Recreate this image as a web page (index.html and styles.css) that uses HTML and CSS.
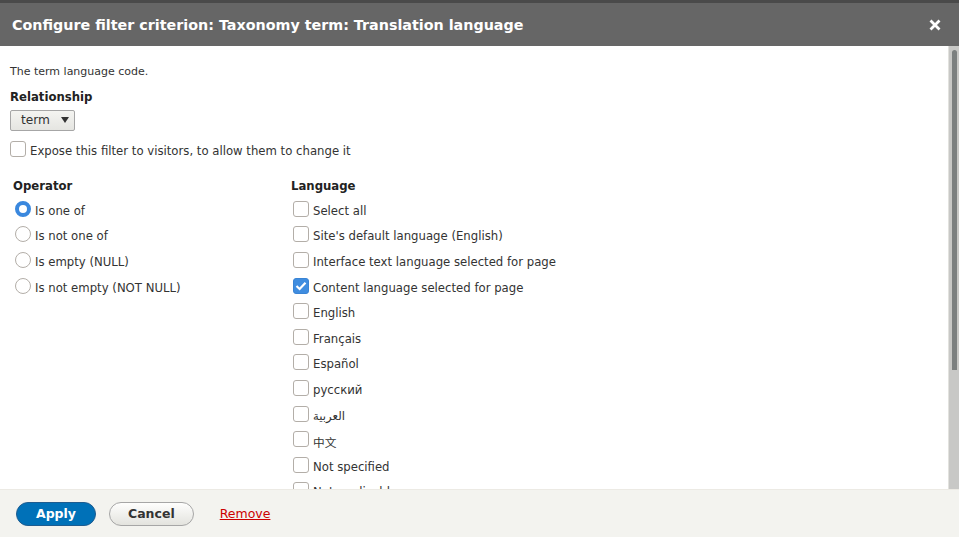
FILE: index.html
```html
<!DOCTYPE html>
<html lang="en">
<head>
<meta charset="utf-8">
<title>Configure filter criterion</title>
<link rel="stylesheet" href="styles.css">
</head>
<body>
<div class="strip"></div>
<div class="dialog">
  <div class="titlebar">
    <span class="title">Configure filter criterion: Taxonomy term: Translation language</span>
    <span class="close">
      <svg width="12" height="12" viewBox="0 0 12 12"><path d="M1.5 1.5 L10.5 10.5 M10.5 1.5 L1.5 10.5" stroke="#fff" stroke-width="2.8" stroke-linecap="butt"/></svg>
    </span>
  </div>
  <div class="body">
    <div class="scroll">
      <p class="desc">The term language code.</p>
      <div class="label">Relationship</div>
      <div class="select"><span>term</span><span class="caret"></span></div>
      <label class="opt expose"><span class="cb"></span>Expose this filter to visitors, to allow them to change it</label>
      <div class="cols">
        <div class="col-op">
          <div class="label">Operator</div>
          <label class="opt"><span class="radio on"></span>Is one of</label>
          <label class="opt"><span class="radio"></span>Is not one of</label>
          <label class="opt"><span class="radio"></span>Is empty (NULL)</label>
          <label class="opt"><span class="radio"></span>Is not empty (NOT NULL)</label>
        </div>
        <div class="col-lang">
          <div class="label">Language</div>
          <label class="opt"><span class="cb"></span>Select all</label>
          <label class="opt"><span class="cb"></span>Site's default language (English)</label>
          <label class="opt"><span class="cb"></span>Interface text language selected for page</label>
          <label class="opt"><span class="cb on"><svg width="12" height="10" viewBox="0 0 12 10"><path d="M1.5 5 L4.6 8 L10.5 1.8" fill="none" stroke="#fff" stroke-width="2.2"/></svg></span>Content language selected for page</label>
          <label class="opt"><span class="cb"></span>English</label>
          <label class="opt"><span class="cb"></span>Français</label>
          <label class="opt"><span class="cb"></span>Español</label>
          <label class="opt"><span class="cb"></span>русский</label>
          <label class="opt"><span class="cb"></span><span lang="ar">العربية</span></label>
          <label class="opt"><span class="cb"></span><span class="cjk">中文</span></label>
          <label class="opt"><span class="cb"></span>Not specified</label>
          <label class="opt"><span class="cb"></span>Not applicable</label>
        </div>
      </div>
    </div>
    <div class="scrollbar"><div class="thumb"></div></div>
  </div>
  <div class="footer">
    <button class="btn primary">Apply</button>
    <button class="btn">Cancel</button>
    <a class="remove" href="#">Remove</a>
  </div>
</div>
</body>
</html>
```
FILE: styles.css
```css
html, body {
  margin: 0;
  padding: 0;
  width: 959px;
  height: 537px;
  overflow: hidden;
  background: #fff;
}
body {
  font-family: "DejaVu Sans", sans-serif;
  color: #333;
}
.strip {
  height: 3px;
  background: #4a4a4a;
}
.dialog {
  display: flex;
  flex-direction: column;
  height: 534px;
}
.titlebar {
  height: 43px;
  background: #666;
  display: flex;
  align-items: center;
  justify-content: space-between;
  padding: 0 18px 0 12px;
  flex: none;
}
.title {
  color: #fff;
  font-weight: bold;
  font-size: 14.3px;
}
.close {
  display: flex;
  align-items: center;
}
.body {
  flex: 1;
  display: flex;
  min-height: 0;
  overflow: hidden;
}
.scroll {
  flex: 1;
  padding: 19px 10px 0 10px;
  overflow: hidden;
}
.scrollbar {
  width: 11px;
  flex: none;
  background: #c8c8c6;
  border-left: 1px solid #e2e2de;
  box-sizing: border-box;
  padding: 4px 2px 0 3px;
}
.thumb {
  height: 320px;
  background: #7c8080;
  border-radius: 3px 3px 0 0;
}
.desc {
  margin: 0 0 12px 0;
  font-size: 11px;
  color: #333;
}
.label {
  font-weight: bold;
  font-size: 11.7px;
  color: #222;
  margin-bottom: 5px;
}
.select {
  display: inline-flex;
  align-items: center;
  gap: 11px;
  height: 21px;
  box-sizing: border-box;
  padding: 0 5px 0 10px;
  border: 1px solid #a6a6a6;
  border-radius: 2px;
  background: linear-gradient(#f4f4f1, #e5e5e1);
  font-size: 12.2px;
  color: #333;
}
.caret {
  width: 0;
  height: 0;
  border-left: 4px solid transparent;
  border-right: 4px solid transparent;
  border-top: 6px solid #333;
}
.opt {
  display: flex;
  align-items: center;
  gap: 4px;
  font-size: 11.7px;
  color: #333;
  height: 25.6px;
}
.expose {
  margin-top: 8px;
}
.cb {
  width: 16px;
  height: 16px;
  box-sizing: border-box;
  border: 1px solid #b3aea8;
  border-radius: 3px;
  background: #fff;
  flex: none;
  display: flex;
  align-items: center;
  justify-content: center;
  margin-top: -4px;
}
.cb.on {
  background: #3f8de0;
  border-color: #3a84d4;
}
.radio {
  width: 16px;
  height: 16px;
  box-sizing: border-box;
  border: 1px solid #b3aea8;
  border-radius: 50%;
  background: #fff;
  flex: none;
  margin-top: -4px;
}
.radio.on {
  border: 4px solid #3a88de;
}
.cols {
  display: flex;
  margin-top: 15px;
}
.col-op {
  width: 278px;
  padding-left: 3px;
}
.col-op .opt {
  padding-left: 2px;
}
.col-lang {
  padding-top: 1px;
}
.col-lang .label {
  margin-top: -1px;
}
.col-lang .opt {
  padding-left: 2px;
}
.cjk {
  font-family: "Noto Sans CJK SC", sans-serif;
}
.footer {
  height: 48px;
  flex: none;
  background: #f3f3ef;
  border-top: 1px solid #eceae4;
  box-sizing: border-box;
  display: flex;
  align-items: center;
  padding: 0 0 0 16px;
  gap: 13px;
}
.btn {
  font-family: "DejaVu Sans", sans-serif;
  font-weight: bold;
  font-size: 12.5px;
  height: 24px;
  padding: 0 18px;
  border-radius: 20px;
  border: 1px solid #a6a6a6;
  background: linear-gradient(#fefefd, #e3e3de);
  color: #333;
  min-width: 80px;
}
.btn.primary {
  background: #0071b8;
  border-color: #1e5c90;
  color: #fff;
}
.remove {
  margin-left: 13px;
  font-size: 12.5px;
  color: #c00;
  text-decoration: underline;
}
```
